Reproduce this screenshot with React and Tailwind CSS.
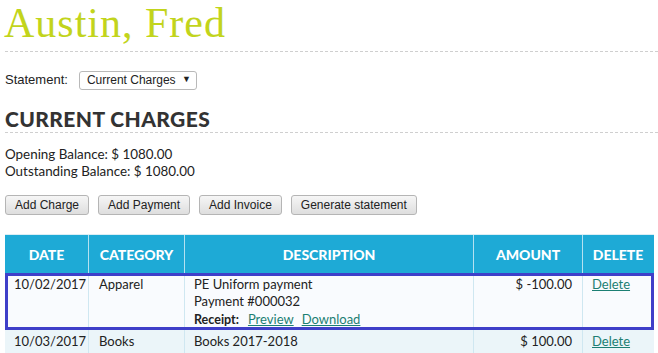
const rows = [
  {
    date: "10/02/2017",
    category: "Apparel",
    lines: ["PE Uniform payment", "Payment #000032"],
    receipt: true,
    amount: "$ -100.00",
    selected: true,
  },
  {
    date: "10/03/2017",
    category: "Books",
    lines: ["Books 2017-2018"],
    receipt: false,
    amount: "$ 100.00",
    selected: false,
  },
];

const cols = "grid grid-cols-[84px_96px_289px_109px_70px]";

const Btn = ({ children }) => (
  <button className="h-[20px] px-[9px] rounded-[3px] border border-[#b5b5b5] bg-gradient-to-b from-[#f6f6f6] to-[#dedede] text-[12px] text-[#222] font-['Liberation_Sans',sans-serif] leading-none">
    {children}
  </button>
);

const App = () => {
  return (
    <div className="w-[658px] h-[353px] overflow-hidden bg-white text-[#222] font-['Lato',sans-serif]">
      {/* Name */}
      <h1 className="pl-[4px] h-[43px] text-[42px] leading-[46px] text-[#c2d41c] font-['Liberation_Serif',serif] font-light tracking-[1px] whitespace-nowrap">
        Austin, Fred
      </h1>
      <div className="ml-[5px] mt-[8px] border-t border-dashed border-[#cfcfcf]" />

      {/* Statement select */}
      <div className="flex items-center pl-[5px] mt-[19px] h-[18px] text-[13px] font-['Liberation_Sans',sans-serif]">
        <span>Statement:</span>
        <div className="ml-[11px] w-[118px] h-[19px] flex items-center justify-between pl-[7px] pr-[5px] border border-[#b9b9b9] rounded-[3px] text-[12px]">
          <span>Current Charges</span>
          <span className="text-[9px]">▼</span>
        </div>
      </div>

      {/* Heading */}
      <h2 className="pl-[5px] mt-[18px] text-[21px] leading-[24px] font-black text-[#333] tracking-[0.4px]">
        CURRENT CHARGES
      </h2>
      <div className="ml-[5px] mt-[1px] border-t border-dashed border-[#cfcfcf]" />

      <div className="pl-[5px] mt-[13px] text-[13.4px] leading-[17px]">
        <p>Opening Balance: $ 1080.00</p>
        <p>Outstanding Balance: $ 1080.00</p>
      </div>

      {/* Buttons */}
      <div className="flex gap-[9px] pl-[5px] mt-[15px]">
        <Btn>Add Charge</Btn>
        <Btn>Add Payment</Btn>
        <Btn>Add Invoice</Btn>
        <Btn>Generate statement</Btn>
      </div>

      {/* Table */}
      <div className="ml-[5px] mt-[19px] w-[649px] border-t border-[#dbeef5]">
        <div className={`${cols} h-[38px] bg-[#1eaad6] text-white text-[14px] font-black`}>
          <div className="flex items-center justify-center border-r border-[#b4e1f1]">DATE</div>
          <div className="flex items-center justify-center border-r border-[#b4e1f1]">CATEGORY</div>
          <div className="flex items-center justify-center border-r border-[#b4e1f1]">DESCRIPTION</div>
          <div className="flex items-center justify-center border-r border-[#b4e1f1]">AMOUNT</div>
          <div className="flex items-center justify-center">DELETE</div>
        </div>

        {rows.map((r) => (
          <div
            key={r.date}
            className={`${cols} text-[13px] leading-[17px] ${
              r.selected
                ? "h-[57px] bg-[#f9fbfe] outline-[3px] outline-[#3f3fc9] outline-offset-[-3px]"
                : "h-[30px] bg-[#ebf5f9]"
            }`}
          >
            <div className="pl-[9px] pt-[3px] border-r border-[#cfe7f1]">{r.date}</div>
            <div className="pl-[10px] pt-[3px] border-r border-[#cfe7f1]">{r.category}</div>
            <div className="pl-[9px] pt-[3px] border-r border-[#cfe7f1]">
              {r.lines.map((l) => (
                <p key={l}>{l}</p>
              ))}
              {r.receipt && (
                <p className="mt-[1px] text-[13px] leading-[17px]">
                  <span className="font-bold text-[12.5px]">Receipt:</span>
                  <a className="ml-[9px] text-[#1c7f73] underline">Preview</a>
                  <a className="ml-[8px] text-[#1c7f73] underline">Download</a>
                </p>
              )}
            </div>
            <div className="pr-[10px] pt-[3px] text-right border-r border-[#cfe7f1]">{r.amount}</div>
            <div className="pl-[9px] pt-[3px]">
              <a className="text-[#1c7f73] underline">Delete</a>
            </div>
          </div>
        ))}
      </div>
    </div>
  );
};

export default App;
